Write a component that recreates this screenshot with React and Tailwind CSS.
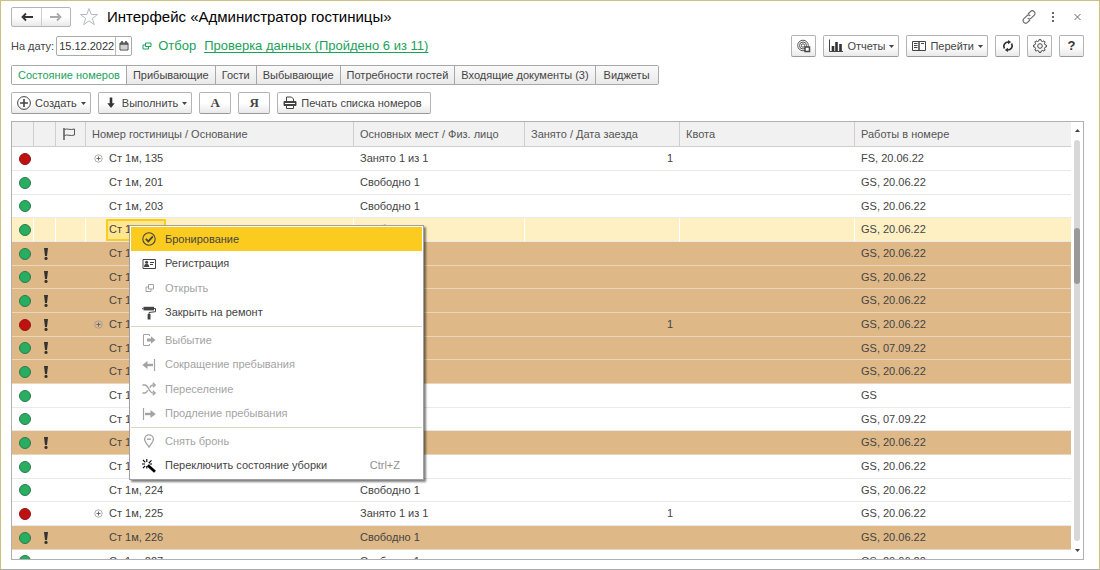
import { useState } from 'react';

const tabs = [
    'Состояние номеров',
    'Прибывающие',
    'Гости',
    'Выбывающие',
    'Потребности гостей',
    'Входящие документы (3)',
    'Виджеты',
];

const rooms = [
    { name: 'Ст 1м, 135', places: 'Занято 1 из 1', busy: 1, works: 'FS, 20.06.22' },
    { name: 'Ст 1м, 201', places: 'Свободно 1', works: 'GS, 20.06.22' },
    { name: 'Ст 1м, 203', places: 'Свободно 1', works: 'GS, 20.06.22' },
    { name: 'Ст 1м, 204', places: 'Свободно 1', works: 'GS, 20.06.22', selected: true },
    { name: 'Ст 1м, 205', places: 'Свободно 1', works: 'GS, 20.06.22', dirty: true },
    { name: 'Ст 1м, 206', places: 'Свободно 1', works: 'GS, 20.06.22', dirty: true },
    { name: 'Ст 1м, 207', places: 'Свободно 1', works: 'GS, 20.06.22', dirty: true },
    { name: 'Ст 1м, 208', places: 'Занято 1', busy: 1, works: 'GS, 20.06.22', dirty: true },
    { name: 'Ст 1м, 209', places: 'Свободно 1', works: 'GS, 07.09.22', dirty: true },
    { name: 'Ст 1м, 210', places: 'Свободно 1', works: 'GS, 20.06.22', dirty: true },
    { name: 'Ст 1м, 211', places: 'Свободно 1', works: 'GS' },
    { name: 'Ст 1м, 212', places: 'Свободно 1', works: 'GS, 07.09.22' },
    { name: 'Ст 1м, 222', places: 'Свободно 1', works: 'GS, 20.06.22', dirty: true },
    { name: 'Ст 1м, 223', places: 'Свободно 1', works: 'GS, 20.06.22' },
    { name: 'Ст 1м, 224', places: 'Свободно 1', works: 'GS, 20.06.22' },
    { name: 'Ст 1м, 225', places: 'Занято 1 из 1', busy: 1, works: 'GS, 20.06.22' },
    { name: 'Ст 1м, 226', places: 'Свободно 1', works: 'GS, 20.06.22', dirty: true },
    { name: 'Ст 1м, 227', places: 'Свободно 1', works: 'GS, 20.06.22' },
];

const menuGroups = [
    [
        { label: 'Бронирование', icon: CheckIcon, active: true },
        { label: 'Регистрация', icon: CardIcon },
        { label: 'Открыть', icon: OpenIcon, disabled: true },
        { label: 'Закрыть на ремонт', icon: RollerIcon },
    ],
    [
        { label: 'Выбытие', icon: LeaveIcon, disabled: true },
        { label: 'Сокращение пребывания', icon: ShortenIcon, disabled: true },
        { label: 'Переселение', icon: ShuffleIcon, disabled: true },
        { label: 'Продление пребывания', icon: ExtendIcon, disabled: true },
    ],
    [
        { label: 'Снять бронь', icon: PinIcon, disabled: true },
        { label: 'Переключить состояние уборки', icon: WandIcon, hotkey: 'Ctrl+Z' },
    ],
];

function Icon({ children, size = 'size-4', box = '0 0 16 16' }) {
    return (
        <svg viewBox={box} className={`${size} shrink-0`} fill="none" stroke="currentColor" aria-hidden="true">
            {children}
        </svg>
    );
}

function CheckIcon() {
    return (
        <Icon>
            <circle cx="8" cy="8" r="6.2" strokeWidth="1.1" />
            <path d="M4.8 7.8l2.5 2.6 4.6-5" strokeWidth="1.8" />
        </Icon>
    );
}

function CardIcon() {
    return (
        <Icon>
            <path d="M2 3.5h12.5v9H2z" />
            <circle cx="5.6" cy="6.2" r="1.5" fill="currentColor" stroke="none" />
            <path d="M3 11c0-4.2 5.2-4.2 5.2 0z" fill="currentColor" stroke="none" />
            <path d="M9 6.5h4M9 8.5h3" />
        </Icon>
    );
}

function OpenIcon() {
    return (
        <Icon>
            <path d="M7.5 4.5h5V9h-5z" />
            <path d="M7.5 7H5v4.5h5V9" />
        </Icon>
    );
}

function RollerIcon() {
    return (
        <Icon>
            <path d="M2.5 1.8H13v3.6H2.5z" fill="currentColor" stroke="none" />
            <path d="M1 3.7h1.5M12.5 3.5h2v3.2L8 7.5v2" />
            <path d="M6.6 9h2.9v5.5H6.6z" fill="currentColor" stroke="none" />
        </Icon>
    );
}

function LeaveIcon() {
    return (
        <Icon>
            <path d="M8.5 4V2.5h-6v11h6V12" />
            <path d="M6 6.6h4V4.2L14.5 8 10 11.8V9.4H6z" fill="currentColor" stroke="none" />
        </Icon>
    );
}

function ShortenIcon() {
    return (
        <Icon>
            <path d="M13.5 2v12" strokeWidth="1.2" />
            <path d="M12 8H5" strokeWidth="2.4" />
            <path d="M6.5 3.9v8.2L1.3 8z" fill="currentColor" stroke="none" />
        </Icon>
    );
}

function ShuffleIcon() {
    return (
        <Icon>
            <path d="M1.5 4h2.3c3.5 0 4.5 8 8 8H14M1.5 12h2.3c1.4 0 2.3-1.3 3-2.7M8.8 6.7C9.6 5.2 10.4 4 11.8 4H14" strokeWidth="1.4" />
            <path d="M11.8 1.8L14.3 4l-2.5 2.2M11.8 9.8l2.5 2.2-2.5 2.2" strokeWidth="1.2" />
        </Icon>
    );
}

function ExtendIcon() {
    return (
        <Icon>
            <path d="M2.5 2v12" strokeWidth="1.2" />
            <path d="M4 8h7" strokeWidth="2.4" />
            <path d="M9.5 3.9v8.2L14.7 8z" fill="currentColor" stroke="none" />
        </Icon>
    );
}

function PinIcon() {
    return (
        <Icon>
            <path d="M8 14C5.5 10.5 3.6 8.5 3.6 6.2a4.4 4.4 0 018.8 0C12.4 8.5 10.5 10.5 8 14z" strokeWidth="1.3" />
            <path d="M6 6.2h4" strokeWidth="1.4" />
        </Icon>
    );
}

function WandIcon() {
    return (
        <span className="text-black">
            <Icon>
                <path d="M6.8 7.3l7.2 6.5" strokeWidth="2.8" />
                <path d="M5.8 1v3M1 6h3M7.8 5l2.7-2.7M2 2l2.3 2.3M4.2 7.8L2 10.2M8.5 6H11M5.8 8v2.5" strokeWidth="1.1" />
            </Icon>
        </span>
    );
}

function Caret() {
    return (
        <svg viewBox="0 0 5 3" className="h-[3px] w-[5px] shrink-0" fill="currentColor" aria-hidden="true">
            <path d="M0 0h5L2.5 3z" />
        </svg>
    );
}

function Button({ children, className = '', ...props }) {
    return (
        <button
            type="button"
            className={`flex h-[22px] items-center justify-center rounded-xs border border-[#b4b4b4] border-b-[#999] bg-linear-to-b from-white from-50% to-[#e9e9e9] ${className}`}
            {...props}
        >
            {children}
        </button>
    );
}

function RoomRow({ room }) {
    const color = room.selected ? 'bg-[#fff0c4]' : room.dirty ? 'bg-[#deb887]' : 'bg-white';
    const line = room.dirty ? 'border-b-[#ead6bb]' : 'border-b-[#e9e9e9]';
    const split = room.selected ? 'border-r border-r-white' : '';
    const cell = `overflow-hidden border-b p-0 whitespace-nowrap ${line} ${split}`;

    return (
        <tr className={`h-6 nth-[3n]:h-[23px] ${color}`}>
            <td className={`${cell} pl-[7px]`}>
                <span className={`block size-3 rounded-full border ${room.busy ? 'border-[#8f1717] bg-[#c01010]' : 'border-[#2b7a4d] bg-[#27ae60]'}`} />
            </td>
            <td className={`${cell} pl-[9px]`}>
                {room.dirty && (
                    <svg viewBox="0 0 6 12" className="h-3 w-1.5" fill="#333" aria-hidden="true">
                        <path d="M1 0h4L4 8H2z" />
                        <circle cx="3" cy="10.4" r="1.6" />
                    </svg>
                )}
            </td>
            <td className={cell} />
            <td className={cell}>
                <div className="flex items-center pl-2">
                    <span className="flex w-3 items-center">
                        {room.busy && (
                            <svg viewBox="0 0 9 9" className="size-[9px]" fill="none" stroke="#999" aria-hidden="true">
                                <circle cx="4.5" cy="4.5" r="3.7" strokeWidth=".8" />
                                <path d="M4.5 2.5v4M2.5 4.5h4" stroke="#666" />
                            </svg>
                        )}
                    </span>
                    <span className={`flex h-[22px] items-center border-2 px-px ${room.selected ? 'border-[#fbcb20] bg-[#ffe68f]' : 'border-transparent'}`}>
                        {room.name}
                    </span>
                </div>
            </td>
            <td className={`${cell} pl-1.5`}>{room.places}</td>
            <td className={`${cell} pr-[7px] text-right`}>{room.busy}</td>
            <td className={cell} />
            <td className={`overflow-hidden border-b p-0 pl-1.5 whitespace-nowrap ${line}`}>{room.works}</td>
        </tr>
    );
}

function ContextMenu() {
    return (
        <div role="menu" className="absolute top-[104px] left-[118px] w-[295px] border border-[#a0a0a0] bg-white p-px shadow-[2px_2px_2px_#00000080]">
            {menuGroups.map((group, i) => (
                <div key={i} className={i > 0 ? 'mt-px border-t border-[#d9d6c3] pt-px' : ''}>
                    {group.map(({ label, icon: Glyph, active, disabled, hotkey }) => (
                        <button
                            key={label}
                            type="button"
                            role="menuitem"
                            disabled={disabled}
                            className={`flex h-6 w-full items-center gap-2 pr-[22px] pl-2.5 text-left even:h-[25px] ${active ? 'bg-[#fbcb20]' : ''} ${disabled ? 'text-[#a3a3a3]' : 'text-[#444]'}`}
                        >
                            <Glyph />
                            <span className="flex-1">{label}</span>
                            {hotkey && <span className="text-[#909090]">{hotkey}</span>}
                        </button>
                    ))}
                </div>
            ))}
        </div>
    );
}

export default function App() {
    const [tab, setTab] = useState(tabs[0]);
    const [date, setDate] = useState('15.12.2022');
    const head = 'border-r border-b border-[#cfcfcf] p-0 text-left font-normal whitespace-nowrap';

    return (
        <div className="flex h-screen flex-col border border-[#d0c080] border-b-[#aaa] bg-white pt-1.5 pr-[15px] pb-[9px] pl-2.5 font-['Liberation_Sans',Arial,sans-serif] text-[11px] text-[#444]">
            {/* Title */}
            <header className="flex h-5 items-center">
                <div className="flex h-5 rounded-xs border border-[#b4b4b4] bg-linear-to-b from-white from-50% to-[#e9e9e9]">
                    <button type="button" aria-label="Назад" className="flex w-[30px] items-center justify-center border-r border-[#ccc] text-[#333]">
                        <Icon size="size-3" box="0 0 12 12">
                            <path d="M3 6h9" strokeWidth="2" />
                            <path d="M5 2.5L1.5 6 5 9.5" strokeWidth="1.8" />
                        </Icon>
                    </button>
                    <button type="button" aria-label="Вперед" className="flex w-7 items-center justify-center text-[#aaa]">
                        <Icon size="size-3" box="0 0 12 12">
                            <path d="M0 6h9" strokeWidth="2" />
                            <path d="M7 2.5L10.5 6 7 9.5" strokeWidth="1.8" />
                        </Icon>
                    </button>
                </div>
                <button type="button" aria-label="В избранное" className="ml-2 text-[#b5bac0]">
                    <Icon size="size-5" box="0 0 20 20">
                        <path d="M10 1.5l2.2 6h6.3l-5.1 3.9 1.9 6.3-5.3-3.8-5.3 3.8 1.9-6.3L1.5 7.500h6.3z" />
                    </Icon>
                </button>
                <h1 className="ml-2 text-[15px] text-black">Интерфейс «Администратор гостиницы»</h1>
                <div className="ml-auto flex items-center gap-3 text-[#666]">
                    <button type="button" aria-label="Ссылка">
                        <Icon size="size-3.5" box="0 0 14 14">
                            <path d="M6 4l2.4-2.4a2.5 2.5 0 013.7 3.7L9.2 8.2a2.5 2.5 0 01-3.5 0M8 10l-2.4 2.4a2.5 2.5 0 01-3.7-3.7l2.9-2.9a2.5 2.5 0 013.5 0" strokeWidth="1.1" />
                        </Icon>
                    </button>
                    <button type="button" aria-label="Еще">
                        <Icon size="size-3" box="0 0 12 12">
                            <path d="M4 1h2v2H4zM4 5h2v2H4zM4 9h2v2H4z" fill="currentColor" stroke="none" />
                        </Icon>
                    </button>
                    <button type="button" aria-label="Закрыть">
                        <Icon size="size-3" box="0 0 12 12">
                            <path d="M2.5 3l6 6M8.500 3l-6 6" />
                        </Icon>
                    </button>
                </div>
            </header>

            {/* Date and form commands */}
            <div className="mt-2 flex h-[22px] items-center">
                <label htmlFor="date">На дату:</label>
                <div className="ml-0.5 flex h-5 w-[76px] rounded-xs border border-[#aaa]">
                    <input
                        id="date"
                        type="text"
                        value={date}
                        className="w-[59px] min-w-0 border-r border-[#bbb] pl-0.5 text-[#333] outline-none"
                        onChange={(e) => setDate(e.target.value)}
                    />
                    <button type="button" aria-label="Календарь" className="flex flex-1 items-center justify-center">
                        <Icon size="size-2.5" box="0 0 10 10">
                            <path d="M1 2h8v7H1z" />
                            <path d="M1 3h8M3 0v2M7 0v2" strokeWidth="1.5" />
                            <path d="M2.5 5h5M2.5 7h5" strokeDasharray="1 1" />
                        </Icon>
                    </button>
                </div>
                <a href="#filter" className="ml-2.5 flex items-center gap-1.5 text-[13px] text-[#1ba25a]">
                    <Icon size="size-2.5" box="0 0 10 10">
                        <path d="M3.5 2H9v3.5H3.5z" />
                        <path d="M3.5 4H1v4h5.5V5.5" />
                    </Icon>
                    Отбор
                </a>
                <a href="#check" className="ml-2 text-[13px] text-[#1ba25a] underline underline-offset-2">Проверка данных (Пройдено 6 из 11)</a>

                <div className="ml-auto flex gap-[7px]">
                    <Button className="w-[25px]" aria-label="Обсуждения">
                        <Icon size="size-3.5" box="0 0 14 14">
                            <circle cx="6" cy="6.5" r="5.3" strokeWidth=".9" />
                            <circle cx="6" cy="6.5" r="3.5" strokeWidth=".9" />
                            <circle cx="6" cy="6.5" r="1.7" strokeWidth=".9" />
                            <path d="M8 8h4.5v4.5H8z" fill="white" strokeWidth="1.5" />
                        </Icon>
                    </Button>
                    <Button className="px-1">
                        <Icon>
                            <path d="M1.5 1.5v12H15" />
                            <path d="M5 8v5M8.5 4v9M12.5 6v7" stroke="#333" strokeWidth="2.6" />
                        </Icon>
                        <span className="mr-1 ml-[3px]">Отчеты</span>
                        <Caret />
                    </Button>
                    <Button className="px-1">
                        <Icon>
                            <path d="M1.5 3.5h13v9h-13z" />
                            <path d="M8 3v10" strokeWidth="1.5" />
                            <path d="M3 5.5h3.5M3 7.5h3.5M3 9.5h3.5M10 5.5h3" />
                        </Icon>
                        <span className="mr-1 ml-[3px]">Перейти</span>
                        <Caret />
                    </Button>
                    <Button className="w-[25px] text-[#333]" aria-label="Обновить">
                        <Icon size="size-3" box="0 0 12 12">
                            <path d="M2.5 8.5C.5 5 3 2 6.5 2M9.5 3.5C11.5 7 9 10 5.5 10" strokeWidth="1.7" />
                            <path d="M6 0v4.2L9.2 2zM6 7.800V12L2.800 10z" fill="currentColor" stroke="none" />
                        </Icon>
                    </Button>
                    <Button className="w-[25px]" aria-label="Настройки">
                        <Icon size="size-3.5" box="0 0 14 14">
                            <circle cx="7" cy="7" r="2.3" />
                            <path d="M5.8 2l.4-1.5h1.6L8.2 2l1.5.6L11 1.8 12.2 3l-.8 1.3.6 1.5 1.500.4v1.6l-1.500.4-.6 1.5.8 1.3L11 12.2l-1.3-.8-1.5.6-.4 1.5H6.2L5.8 12l-1.500-.6-1.3.8L1.8 11l.8-1.3L2 8.2.5 7.8V6.2L2 5.8l.6-1.5L1.8 3 3 1.800l1.3.8z" />
                        </Icon>
                    </Button>
                    <Button className="w-[25px] text-[13px] font-bold text-[#333]" aria-label="Справка">?</Button>
                </div>
            </div>

            {/* Tabs */}
            <nav className="mt-2 flex h-5 w-fit shrink-0 rounded-xs border border-[#a8a8a8]" role="tablist">
                {tabs.map((name) => (
                    <button
                        key={name}
                        type="button"
                        role="tab"
                        aria-selected={tab === name}
                        className={`border-r border-[#a8a8a8] px-1.5 last:border-r-0 last:px-2 ${tab === name ? 'bg-white text-[#1ba25a]' : 'bg-linear-to-b from-[#fafafa] to-[#e9e9e9]'}`}
                        onClick={() => setTab(name)}
                    >
                        {name}
                    </button>
                ))}
            </nav>

            {/* List commands */}
            <div className="mt-[7px] flex gap-[7px]">
                <Button className="px-1">
                    <Icon>
                        <circle cx="8" cy="8" r="6.4" />
                        <path d="M8 4v8M4 8h8" strokeWidth="1.6" />
                    </Icon>
                    <span className="mr-1 ml-[3px]">Создать</span>
                    <Caret />
                </Button>
                <Button className="px-1">
                    <Icon>
                        <path d="M8 2.5V9" stroke="#333" strokeWidth="2.6" />
                        <path d="M4.3 8.2h7.4L8 13z" fill="#333" stroke="none" />
                    </Icon>
                    <span className="mr-1 ml-[3px]">Выполнить</span>
                    <Caret />
                </Button>
                <Button className="w-8 font-['Liberation_Serif',serif] text-[13px] font-bold">А</Button>
                <Button className="w-8 font-['Liberation_Serif',serif] text-[13px] font-bold">Я</Button>
                <Button className="px-1">
                    <Icon>
                        <path d="M4.5 7V2h5l2 2v3" />
                        <path d="M2 6.5h12v4H2z" fill="#444" />
                        <path d="M4.5 10.5v3h7v-3z" fill="white" />
                        <path d="M3 8.5h10" stroke="white" />
                    </Icon>
                    <span className="mr-1 ml-[3px]">Печать списка номеров</span>
                </Button>
            </div>

            {/* Rooms */}
            <main className="relative mt-[7px] min-h-0 flex-1">
                <div className="flex h-full overflow-hidden border border-[#b0b0b0]">
                    <div className="min-w-0 flex-1 overflow-hidden">
                        <table className="w-full table-fixed border-separate border-spacing-0">
                            <colgroup>
                                <col className="w-[22px]" />
                                <col className="w-[22px]" />
                                <col className="w-[30px]" />
                                <col className="w-[268px]" />
                                <col className="w-[171px]" />
                                <col className="w-[155px]" />
                                <col className="w-[175px]" />
                                <col />
                            </colgroup>
                            <thead className="bg-[#f1f1f1] text-[#555]">
                                <tr className="h-[25px]">
                                    <th className={head} aria-label="Состояние" />
                                    <th className={head} aria-label="Уборка" />
                                    <th className={head} aria-label="Флаг">
                                        <span className="flex pl-[5px]">
                                            <Icon>
                                                <path d="M3 2v12" strokeWidth="1.5" />
                                                <path d="M3.5 3.5c3-1.5 5 1 10-.5v6c-4.5 1.5-7-1-10 .5" />
                                            </Icon>
                                        </span>
                                    </th>
                                    <th className={`${head} pl-1.5`}>Номер гостиницы / Основание</th>
                                    <th className={`${head} pl-1.5`}>Основных мест / Физ. лицо</th>
                                    <th className={`${head} pl-1.5`}>Занято / Дата заезда</th>
                                    <th className={`${head} pl-1.5`}>Квота</th>
                                    <th className="border-b border-[#cfcfcf] p-0 pl-1.5 text-left font-normal">Работы в номере</th>
                                </tr>
                            </thead>
                            <tbody>
                                {rooms.map((room) => (
                                    <RoomRow key={room.name} room={room} />
                                ))}
                            </tbody>
                        </table>
                    </div>
                    <div className="flex w-3 flex-col items-center">
                        <button type="button" aria-label="Вверх" className="flex h-[18px] rotate-180 items-center">
                            <Caret />
                        </button>
                        <div className="relative w-1.5 flex-1 rounded-full bg-[#d8d8d8]">
                            <div className="absolute top-[22%] h-[14%] w-full rounded-full bg-[#999]" />
                        </div>
                        <button type="button" aria-label="Вниз" className="flex h-[18px] items-center">
                            <Caret />
                        </button>
                    </div>
                </div>
                <ContextMenu />
            </main>
        </div>
    );
}
